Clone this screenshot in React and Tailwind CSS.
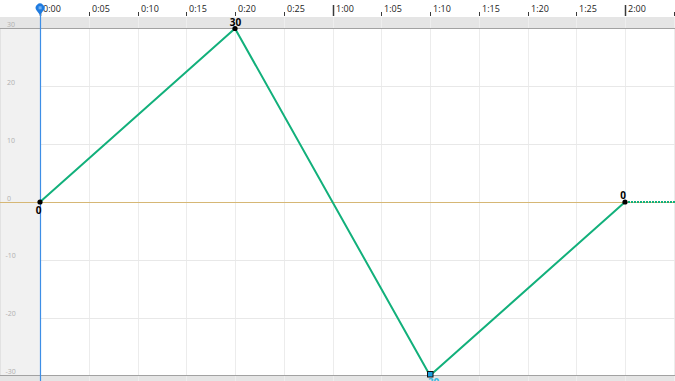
import React from "react";

const TICK_LABELS = ["0:00","0:05","0:10","0:15","0:20","0:25","1:00","1:05","1:10","1:15","1:20","1:25","2:00",""];
const tx = (i) => Math.round(40 + 48.75 * i);
const vy = (v) => 202 - v * (173.5 / 30);

function Ruler() {
  return (
    <svg width="675" height="17" className="block">
      {TICK_LABELS.map((lab, i) => {
        const x = tx(i);
        const major = i % 6 === 0;
        return (
          <g key={i}>
            <line x1={x + 0.5} x2={x + 0.5} y1={major ? 5 : 12} y2={16} stroke="#3a3a3a" strokeWidth={major ? 1.5 : 1} />
            {lab && (
              <text x={x + 3} y={12} fontSize="9" fill="#222">{lab}</text>
            )}
          </g>
        );
      })}
    </svg>
  );
}

function Overlay() {
  const yLabels = [30, 20, 10, 0, -10, -20, -30];
  const pts = [
    [40, 0],
    [235, 30],
    [430, -30],
    [625, 0],
  ].map(([x, v]) => [x, vy(v)]);
  return (
    <svg width="675" height="381" className="absolute inset-0 block">
      {/* vertical grid lines */}
      {TICK_LABELS.map((_, i) => {
        const x = tx(i) + 0.5;
        if (i === 0) return null;
        return (
          <g key={i}>
            <line x1={x} x2={x} y1={17} y2={28} stroke="#eeeeee" />
            <line x1={x} x2={x} y1={29} y2={375} stroke="#ececec" />
            <line x1={x} x2={x} y1={376} y2={381} stroke="#eeeeee" />
          </g>
        );
      })}
      {/* horizontal grid lines */}
      {[20, 10, -10, -20].map((v) => (
        <line key={v} x1={40} x2={675} y1={Math.round(vy(v)) + 0.5} y2={Math.round(vy(v)) + 0.5} stroke="#e8e8e8" />
      ))}
      {/* zero line */}
      <line x1={0} x2={675} y1={202.5} y2={202.5} stroke="#d6b775" />
      {/* y labels */}
      {yLabels.map((v) => (
        <text key={v} x={v < 0 ? 5.5 : 7} y={vy(v) - 1.5} fontSize="7" fill="#b0b0b0">{v}</text>
      ))}
      {/* cursor */}
      <line x1={40.5} x2={40.5} y1={10} y2={381} stroke="#3d8ee6" strokeWidth="1.2" />
      <path d="M40 15 L36.6 10.5 A4.3 4.3 0 1 1 43.4 10.5 Z" fill="#1f7be0" />
      <rect x={38.6} y={6.3} width={3} height={3} fill="#6fb0f2" />
      {/* data */}
      <polyline
        points={pts.map((p) => p.join(",")).join(" ")}
        fill="none"
        stroke="#12b07b"
        strokeWidth="2"
        strokeLinejoin="round"
      />
      <line x1={625} x2={675} y1={202} y2={202} stroke="#12b07b" strokeWidth="2" strokeDasharray="2 1" />
      <circle cx={40} cy={202} r={2.6} fill="#000" />
      <circle cx={235} cy={28.5} r={2.6} fill="#000" />
      <circle cx={625} cy={202} r={2.6} fill="#000" />
      <rect x={427.5} y={371.5} width={5.5} height={5.5} fill="#1a9fe0" stroke="#111" strokeWidth="1" />
      <text x={38.5} y={214} fontSize="10" fontWeight="700" fill="#000" textAnchor="middle">0</text>
      <text x={235.5} y={26} fontSize="10" fontWeight="700" fill="#000" textAnchor="middle">30</text>
      <text x={623} y={198.5} fontSize="10" fontWeight="700" fill="#000" textAnchor="middle">0</text>
      <text x={432} y={386} fontSize="10" fontWeight="700" fill="#36b8e0" textAnchor="middle">-30</text>
    </svg>
  );
}

export default function App() {
  return (
    <div className="relative w-[675px] h-[381px] overflow-hidden bg-white font-['Open_Sans',sans-serif] flex flex-col">
      <div className="h-[17px] shrink-0 bg-white">
        <Ruler />
      </div>
      <div className="h-[11px] shrink-0 bg-[#e5e5e5]" />
      <div className="h-px shrink-0 bg-[#a2a2a2]" />
      <div className="flex h-[346px] shrink-0">
        <div className="w-[40px] bg-[#f1f1f1] border-l border-[#e2e2e2]" />
        <div className="flex-1 bg-white" />
      </div>
      <div className="h-px shrink-0 bg-[#a2a2a2]" />
      <div className="flex-1 bg-[#e5e5e5]" />
      <Overlay />
    </div>
  );
}
